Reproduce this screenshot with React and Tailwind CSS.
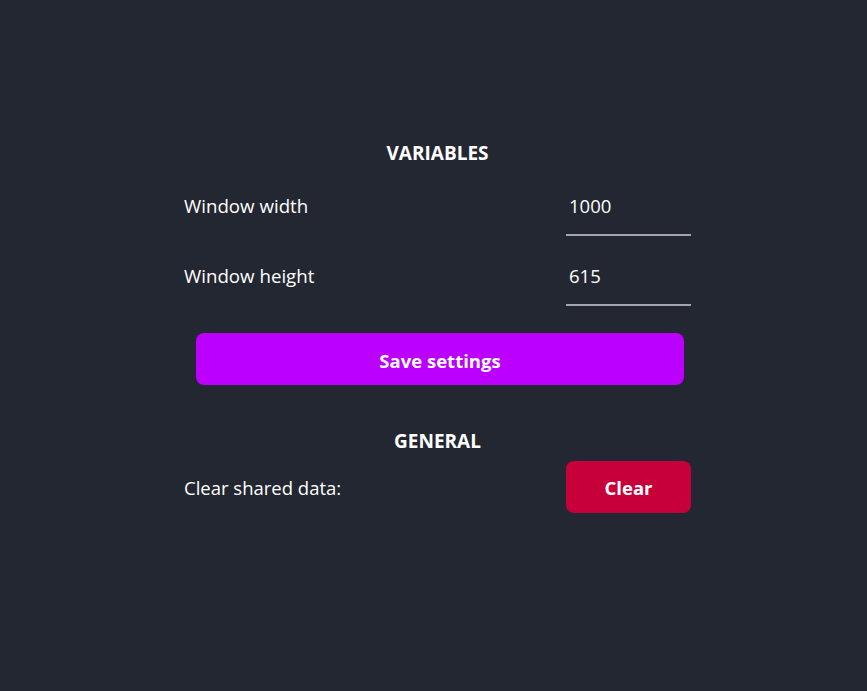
const rows = [
  ['Window width', '1000'],
  ['Window height', '615'],
]

export default function App() {
  return (
    <div className="min-h-screen bg-[#222731] font-['Open_Sans',sans-serif] text-white">
      <div className="flex justify-center pl-[8px] pt-[141px]">
        <div className="w-[507px]">
          <h2 className="flex h-[24px] items-center justify-center text-[19px] font-bold">VARIABLES</h2>
          <div className="mt-[11px] flex flex-col gap-[10px]">
            {rows.map(([label, value]) => (
              <div key={label} className="flex items-center justify-between">
                <span className="text-[18.7px]">{label}</span>
                <input
                  defaultValue={value}
                  className="h-[60px] w-[125px] border-b-2 border-[#a3a5aa] bg-transparent px-[3px] text-[18.5px] text-white outline-none"
                />
              </div>
            ))}
          </div>
          <button className="ml-[12px] mt-[27px] flex h-[52px] w-[488px] items-center justify-center rounded-[8px] bg-[#bb00ff] pt-[3px] text-[18.5px] font-bold">
            Save settings
          </button>
          <h2 className="mt-[44px] flex h-[24px] items-center justify-center text-[19px] font-bold">GENERAL</h2>
          <div className="mt-[8px] flex items-center justify-between">
            <span className="pt-[1px] text-[18.5px]">Clear shared data:</span>
            <button className="flex h-[52px] w-[125px] items-center justify-center rounded-[8px] bg-[#c8003a] pt-[2px] text-[18.5px] font-bold">
              Clear
            </button>
          </div>
        </div>
      </div>
    </div>
  )
}
